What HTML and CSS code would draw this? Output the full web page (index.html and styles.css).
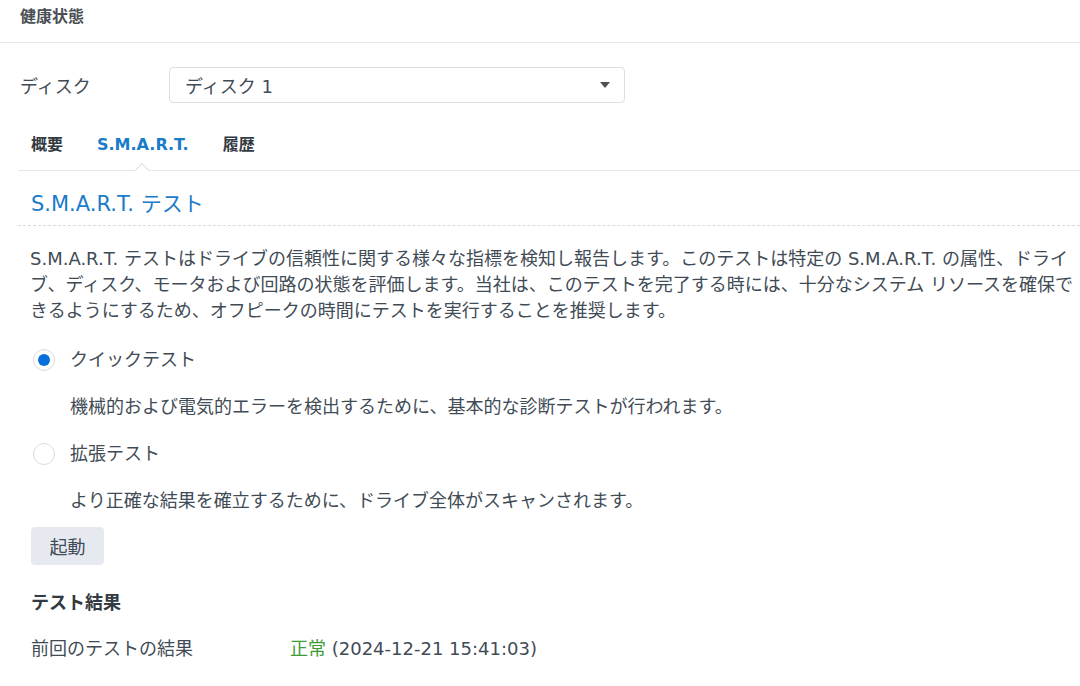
FILE: index.html
```html
<!DOCTYPE html>
<html lang="ja">
<head>
<meta charset="utf-8">
<link rel="stylesheet" href="styles.css">
</head>
<body>
<div class="page">
  <div class="header">健康状態</div>
  <div class="disk-row">
    <div class="disk-label">ディスク</div>
    <div class="select">
      <span>ディスク 1</span>
      <span class="caret"></span>
    </div>
  </div>
  <div class="tabs">
    <div class="tab">概要</div>
    <div class="tab active">S.M.A.R.T.<span class="notch"></span></div>
    <div class="tab">履歴</div>
  </div>
  <div class="section">
    <div class="section-title">S.M.A.R.T. テスト</div>
    <p class="desc">S.M.A.R.T. テストはドライブの信頼性に関する様々な指標を検知し報告します。このテストは特定の S.M.A.R.T. の属性、ドライ<br>ブ、ディスク、モータおよび回路の状態を評価します。当社は、このテストを完了する時には、十分なシステム リソースを確保で<br>きるようにするため、オフピークの時間にテストを実行することを推奨します。</p>
    <div class="option first">
      <span class="radio checked"></span>
      <span class="option-label">クイックテスト</span>
    </div>
    <div class="option-desc">機械的および電気的エラーを検出するために、基本的な診断テストが行われます。</div>
    <div class="option">
      <span class="radio"></span>
      <span class="option-label">拡張テスト</span>
    </div>
    <div class="option-desc">より正確な結果を確立するために、ドライブ全体がスキャンされます。</div>
    <button class="btn">起動</button>
    <div class="result-title">テスト結果</div>
    <div class="result-row">
      <div class="result-label">前回のテストの結果</div>
      <div class="result-value"><span class="ok">正常</span> (2024-12-21 15:41:03)</div>
    </div>
  </div>
</div>
</body>
</html>
```

FILE: styles.css
```css
html, body {
  margin: 0;
  padding: 0;
  background: #fff;
}
body {
  font-family: "DejaVu Sans", "Noto Sans CJK JP", sans-serif;
  color: #414b55;
}
.page {
  width: 1080px;
  height: 686px;
  overflow: hidden;
}
.header {
  height: 42px;
  line-height: 34px;
  padding-left: 20px;
  font-size: 16px;
  font-weight: bold;
  color: #4a4f55;
  border-bottom: 1px solid #e8e8e8;
}
.disk-row {
  display: flex;
  align-items: center;
  margin-top: 24px;
  padding-left: 20px;
}
.disk-label {
  width: 149px;
  font-size: 18px;
}
.select {
  box-sizing: border-box;
  width: 456px;
  height: 36px;
  border: 1px solid #dcdfe3;
  border-radius: 4px;
  display: flex;
  align-items: center;
  justify-content: space-between;
  padding: 0 14px 0 15px;
  font-size: 18px;
}
.caret {
  width: 0;
  height: 0;
  border-left: 5px solid transparent;
  border-right: 5px solid transparent;
  border-top: 6px solid #505050;
}
.tabs {
  display: flex;
  gap: 34px;
  margin: 17px 0 0 18px;
  padding-left: 13px;
  height: 50px;
  line-height: 50px;
  border-bottom: 1px solid #e8e8e8;
}
.tab {
  position: relative;
  font-size: 16px;
  font-weight: bold;
  color: #333a42;
}
.tab.active {
  color: #1a7bc9;
}
.notch {
  position: absolute;
  left: 50%;
  bottom: -5px;
  width: 9px;
  height: 9px;
  margin-left: -6px;
  background: #fff;
  border-left: 1px solid #e0e0e0;
  border-top: 1px solid #e0e0e0;
  transform: rotate(45deg);
}
.section {
  margin-left: 18px;
}
.section-title {
  padding: 18px 0 6px 13px;
  line-height: 30px;
  font-size: 21px;
  color: #1a7bc9;
  border-bottom: 1px dashed #dadada;
}
.desc {
  margin: 20px 0 0 12px;
  font-size: 18px;
  line-height: 26px;
  white-space: nowrap;
}
.option {
  display: flex;
  align-items: center;
  margin: 21px 0 0 15px;
  height: 26px;
}
.option.first {
  margin-top: 23px;
}
.radio {
  box-sizing: border-box;
  width: 22px;
  height: 22px;
  border-radius: 50%;
  border: 1px solid #d8dce0;
  background: #fff;
  margin-right: 15px;
  display: flex;
  align-items: center;
  justify-content: center;
}
.radio.checked::after {
  content: "";
  width: 12px;
  height: 12px;
  border-radius: 50%;
  background: #0a6fdd;
}
.option-label {
  font-size: 18px;
  line-height: 26px;
}
.option-desc {
  margin: 21px 0 0 52px;
  font-size: 18px;
  line-height: 26px;
}
.btn {
  display: block;
  margin: 13px 0 0 13px;
  width: 73px;
  height: 38px;
  border: none;
  border-radius: 4px;
  background: #e6eaf0;
  font-family: inherit;
  font-size: 18px;
  color: #414b55;
  padding: 0;
}
.result-title {
  margin: 25px 0 0 13px;
  font-size: 18px;
  font-weight: bold;
  line-height: 26px;
  color: #333a42;
}
.result-row {
  display: flex;
  margin: 20px 0 0 13px;
  font-size: 18px;
  line-height: 26px;
}
.result-label {
  width: 259px;
}
.ok {
  color: #3d9b35;
}
```
